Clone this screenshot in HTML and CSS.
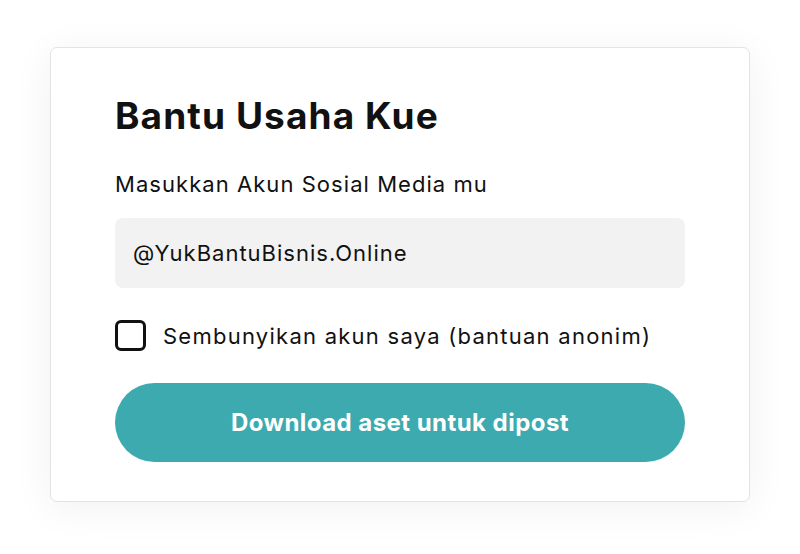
FILE: index.html
```html
<!DOCTYPE html>
<html lang="id">
<head>
<meta charset="utf-8">
<title>Bantu Usaha Kue</title>
<link rel="stylesheet" href="styles.css">
</head>
<body>
<main class="page">
  <section class="card">
    <h1 class="title">Bantu Usaha Kue</h1>
    <p class="label">Masukkan Akun Sosial Media mu</p>
    <div class="input">@YukBantuBisnis.Online</div>
    <label class="check-row">
      <span class="checkbox"></span>
      <span class="check-text">Sembunyikan akun saya (bantuan anonim)</span>
    </label>
    <button class="btn">Download aset untuk dipost</button>
  </section>
</main>
</body>
</html>
```

FILE: styles.css
```css
* { box-sizing: border-box; }
html, body { margin: 0; padding: 0; background: #ffffff; }
body {
  font-family: Inter, "Noto Sans", "Liberation Sans", sans-serif;
  color: #111111;
}
.page {
  padding: 47px 50px;
}
.card {
  width: 700px;
  height: 455px;
  background: #ffffff;
  border: 1px solid #e3e3e3;
  border-radius: 7px;
  box-shadow: 0 6px 40px rgba(0, 0, 0, 0.06);
  padding: 46px 64px 38px;
  display: flex;
  flex-direction: column;
}
.title {
  margin: 0;
  font-size: 37px;
  line-height: 44px;
  font-weight: 700;
  letter-spacing: 1.1px;
}
.label {
  margin: 32px 0 0;
  font-size: 22px;
  line-height: 28px;
  font-weight: 400;
  letter-spacing: 1.05px;
}
.input {
  margin-top: 20px;
  height: 70px;
  background: #f2f2f2;
  border-radius: 8px;
  padding: 0 18px;
  display: flex;
  align-items: center;
  font-size: 22px;
  letter-spacing: 1px;
}
.check-row {
  margin-top: 32px;
  display: flex;
  align-items: center;
  gap: 17px;
  font-size: 22px;
  letter-spacing: 1.25px;
}
.checkbox {
  width: 31px;
  height: 31px;
  border: 3px solid #111111;
  border-radius: 6px;
  flex: none;
}
.btn {
  margin-top: 32px;
  height: 79px;
  width: 100%;
  border: none;
  border-radius: 40px;
  background: #3daab0;
  color: #ffffff;
  font-family: inherit;
  font-size: 24px;
  font-weight: 700;
  letter-spacing: 0.45px;
  cursor: pointer;
}
```
